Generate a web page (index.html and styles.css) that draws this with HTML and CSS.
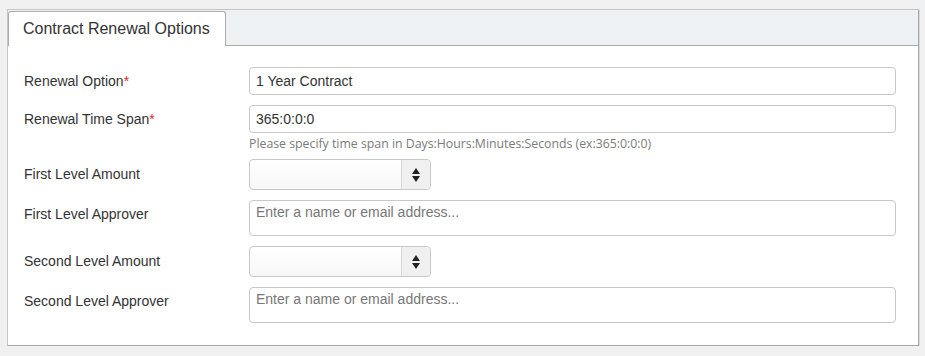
FILE: index.html
```html
<!DOCTYPE html>
<html>
<head>
<meta charset="utf-8">
<link rel="stylesheet" href="styles.css">
</head>
<body>
<div class="panel">
  <div class="tabs">
    <div class="tab">Contract Renewal Options</div>
  </div>
  <div class="body">
    <div class="row row-text">
      <label class="label">Renewal Option<span class="req">*</span></label>
      <div class="field"><input class="input" type="text" value="1 Year Contract"></div>
    </div>
    <div class="row row-text">
      <label class="label">Renewal Time Span<span class="req">*</span></label>
      <div class="field">
        <input class="input" type="text" value="365:0:0:0">
        <div class="help">Please specify time span in Days:Hours:Minutes:Seconds (ex:365:0:0:0)</div>
      </div>
    </div>
    <div class="row row-num">
      <label class="label">First Level Amount</label>
      <div class="field">
        <div class="spin"><input class="spin-input" type="text"><span class="spin-btn"><span class="up"></span><span class="down"></span></span></div>
      </div>
    </div>
    <div class="row row-area">
      <label class="label">First Level Approver</label>
      <div class="field"><textarea class="area" placeholder="Enter a name or email address..."></textarea></div>
    </div>
    <div class="row row-num">
      <label class="label">Second Level Amount</label>
      <div class="field">
        <div class="spin"><input class="spin-input" type="text"><span class="spin-btn"><span class="up"></span><span class="down"></span></span></div>
      </div>
    </div>
    <div class="row row-area last">
      <label class="label">Second Level Approver</label>
      <div class="field"><textarea class="area" placeholder="Enter a name or email address..."></textarea></div>
    </div>
  </div>
</div>
</body>
</html>
```

FILE: styles.css
```css
* { box-sizing: border-box; }
html, body { margin: 0; }
body {
  background: #f0f0f0;
  padding: 9px 0 0 7px;
  font-family: "Liberation Sans", Arial, sans-serif;
  color: #333;
}
.panel {
  width: 912px;
  border: 1px solid #c6c6c6;
  border-right-color: #a8a8a8;
  border-bottom-color: #a8a8a8;
  box-shadow: 1px 1px 0 #d8d8d8;
  background: #fff;
}
.tabs {
  height: 36px;
  background: #eef1f4;
  border-bottom: 1px solid #acacac;
  padding-top: 1px;
  display: flex;
}
.tab {
  width: 218px;
  height: 35px;
  background: #fff;
  border: 1px solid #acacac;
  border-bottom: none;
  border-radius: 3px 3px 0 0;
  font-size: 16px;
  line-height: 34px;
  padding-left: 14px;
  color: #333;
}
.body {
  padding: 21px 22px 22px 16px;
}
.row {
  display: flex;
  align-items: flex-start;
  margin-bottom: 10px;
}
.row.last { margin-bottom: 0; }
.label {
  width: 225px;
  flex: none;
  font-size: 14px;
  line-height: 20px;
  color: #333;
  padding-top: 4px;
}
.row-num .label { padding-top: 5px; }
.req { color: #e8202a; }
.field { flex: 1; }
.input {
  display: block;
  width: 100%;
  height: 28px;
  border: 1px solid #c8c8c8;
  border-radius: 4px;
  padding: 0 6px;
  font-family: "Liberation Sans", Arial, sans-serif;
  font-size: 14px;
  color: #333;
  background: #fff;
  outline: none;
}
.help {
  font-family: "Open Sans", "Noto Sans", sans-serif;
  font-size: 12.3px;
  color: #7b7b7b;
  line-height: 17px;
  margin-top: 2px;
  margin-bottom: -3px;
}
.spin {
  display: flex;
  width: 182px;
  height: 31px;
  border: 1px solid #c8c8c8;
  border-radius: 4px;
  overflow: hidden;
  background: linear-gradient(#ffffff, #f7f7f7);
}
.spin-input {
  flex: 1;
  min-width: 0;
  border: none;
  background: transparent;
  outline: none;
  padding: 0 6px;
  font-size: 14px;
}
.spin-btn {
  width: 29px;
  flex: none;
  border-left: 1px solid #d6d6d6;
  background: #f0f0f0;
  display: flex;
  flex-direction: column;
  align-items: center;
  justify-content: center;
  gap: 2px;
}
.up, .down {
  width: 0;
  height: 0;
  border-left: 4.5px solid transparent;
  border-right: 4.5px solid transparent;
}
.up { border-bottom: 6px solid #222; }
.down { border-top: 6px solid #222; }
.area {
  display: block;
  width: 100%;
  height: 36px;
  border: 1px solid #c8c8c8;
  border-radius: 4px;
  padding: 3px 6px;
  font-family: "Liberation Sans", Arial, sans-serif;
  font-size: 14px;
  line-height: 16px;
  resize: none;
  outline: none;
  color: #333;
}
.area::placeholder { color: #777; opacity: 1; }
```
